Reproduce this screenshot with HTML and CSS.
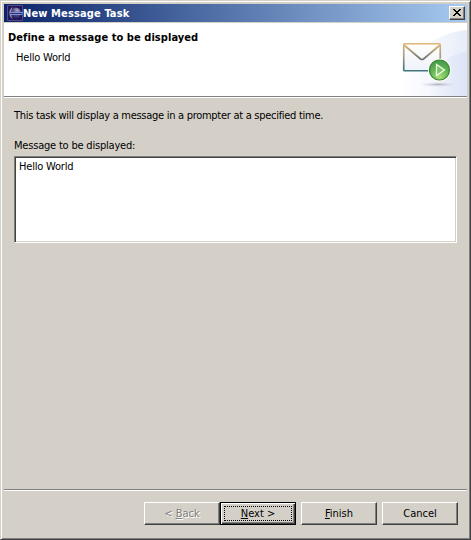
FILE: index.html
```html
<!DOCTYPE html>
<html lang="en">
<head>
<meta charset="utf-8">
<title>New Message Task</title>
<link rel="stylesheet" href="styles.css">
</head>
<body>
<main class="window">
  <header class="titlebar">
    <svg class="app-icon" width="16" height="16" viewBox="0 0 16 16">
      <defs><radialGradient id="moon" cx=".65" cy=".25" r=".8"><stop offset="0" stop-color="#a8a4c8"/><stop offset=".45" stop-color="#545084"/><stop offset="1" stop-color="#201c5c"/></radialGradient></defs>
      <path fill="#201858" stroke="#584888" d="M.5.5h15v15H.5z"/>
      <circle cx="8.500" cy="8" r="5.500" fill="url(#moon)"/>
      <path d="M6 2C1 4 1 12 6 14 3.500 11 3.500 5 6 2z" fill="#9c8cb8"/>
      <path d="M3 7.500h13M3 9.500h12" stroke="#7c94dc"/>
      <path d="M3 8.500h12" stroke="#30306c"/>
    </svg>
    <h1 class="title"><span>New Message Task</span></h1>
    <button class="close" aria-label="Close"><svg width="8" height="7" viewBox="0 0 8 7" shape-rendering="crispEdges"><path d="M0 0h2v1h1v1h2V1h1V0h2v1H7v1H6v1H5v1h1v1h1v1h1v1H6V6H5V5H3v1H2v1H0V6h1V5h1V4h1V3H2V2H1V1H0z"/></svg></button>
  </header>
  <section class="banner">
    <div class="banner-text">
      <h2 class="heading">Define a message to be displayed</h2>
      <p class="subtitle">Hello World</p>
    </div>
    <svg class="banner-art" width="75" height="73" viewBox="0 0 75 73">
      <defs>
        <linearGradient id="fade" x1="0" x2="1"><stop offset="0" stop-color="#fff"/><stop offset=".55" stop-color="#f3f6fd"/><stop offset="1" stop-color="#e6edf9"/></linearGradient>
        <linearGradient id="edge" x1="0" y1="0" x2="0" y2="1"><stop offset="0" stop-color="#dfb778"/><stop offset=".5" stop-color="#9c9c88"/><stop offset="1" stop-color="#40747c"/></linearGradient>
        <linearGradient id="paper" x1="0" y1="0" x2="0" y2="1"><stop offset="0" stop-color="#fffefa"/><stop offset="1" stop-color="#eef2fb"/></linearGradient>
        <linearGradient id="flap" x1="0" y1="0" x2="0" y2="1"><stop offset="0" stop-color="#d8b47c"/><stop offset="1" stop-color="#687474"/></linearGradient>
        <linearGradient id="arc" x1="0" x2="1"><stop offset="0" stop-color="#dfe6f7" stop-opacity="0"/><stop offset="1" stop-color="#dce5f7"/></linearGradient>
        <radialGradient id="green" cx=".5" cy=".85" r=".9"><stop offset="0" stop-color="#a8e078"/><stop offset=".5" stop-color="#64b454"/><stop offset="1" stop-color="#3c9444"/></radialGradient>
        <radialGradient id="shade"><stop offset="0" stop-color="#b4b0c0"/><stop offset="1" stop-color="#d8dcec" stop-opacity="0"/></radialGradient>
      </defs>
      <path d="M10 73C10 38 38 10 75 7v66z" fill="url(#fade)"/>
      <path d="M36 73C40 48 53 31 75 29v44z" fill="url(#arc)"/>
      <ellipse cx="46" cy="61.500" rx="19" ry="2.500" fill="url(#shade)"/>
      <rect x="11.750" y="20.750" width="36.500" height="27" rx="1" fill="url(#paper)" stroke="url(#edge)" stroke-width="1.700"/>
      <path d="M12 22l16.500 14q1.500 1 3 0L48 22" fill="none" stroke="url(#flap)" stroke-width="1.700"/>
      <circle cx="47.500" cy="47" r="11.500" fill="#fffdf0"/>
      <circle cx="47.500" cy="47" r="10" fill="url(#green)" stroke="#39863b" stroke-width="1.200"/>
      <path d="M44.500 41.500v11l8-5.500z" fill="#78c66c" stroke="#f4ffe8" stroke-width="1.200"/>
    </svg>
  </section>
  <section class="content">
    <p class="description"><span>This task will display a message in a prompter at a specified time.</span></p>
    <label class="label" for="message">Message to be displayed:</label>
    <div class="field" id="message"><span class="value">Hello World</span></div>
  </section>
  <footer class="footer">
    <button class="button back" disabled><span>&lt; <u>B</u>ack</span></button>
    <button class="button next"><span><u>N</u>ext &gt;</span></button>
    <button class="button finish"><span><u>F</u>inish</span></button>
    <button class="button"><span>Cancel</span></button>
  </footer>
</main>
</body>
</html>
```
FILE: styles.css
```css
* { box-sizing: border-box; }
body {
  margin: 0;
  color: #000;
  font: 11px/14px Tahoma, "DejaVu Sans Condensed", "DejaVu Sans", sans-serif;
  font-stretch: condensed;
  white-space: nowrap;
}
h1, h2, p { margin: 0; font-size: 11px; line-height: 14px; }
.window {
  width: 471px;
  height: 540px;
  display: flex;
  flex-direction: column;
  padding: 3px 2px 2px 3px;
  background: #d4d0c8;
  border: 1px solid;
  border-color: #d4d0c8 #404040 #404040 #d4d0c8;
  box-shadow: inset 1px 1px #fff, inset -1px -1px #808080;
}
.titlebar {
  width: 463px;
  height: 18px;
  display: flex;
  align-items: center;
  padding: 0 2px 0 3px;
  background: linear-gradient(90deg, #0a246a, #a6caf0);
}
.app-icon { flex: none; }
.title { flex: 1; padding-top: 2px; color: #fff; letter-spacing: .13px; }
.close {
  width: 16px;
  height: 14px;
  display: flex;
  justify-content: center;
  align-items: flex-start;
  padding: 2px 1px 0 0;
  background: #d4d0c8;
  border: 1px solid;
  border-color: #fff #404040 #404040 #fff;
  box-shadow: inset -1px -1px #808080;
}
.banner {
  width: 463px;
  height: 76px;
  display: flex;
  justify-content: space-between;
  background: #fff;
  border-top: 1px solid #d4d0c8;
  border-bottom: 1px solid #fff;
  box-shadow: inset 0 -1px #808080;
}
.banner-text { padding: 8px 0 0 4px; }
.heading { letter-spacing: .06px; }
.subtitle { padding: 6px 0 0 8px; letter-spacing: -.2px; }
.content { flex: 1; width: 463px; padding: 11px 9px 0 10px; }
.description { letter-spacing: -.28px; }
.label { display: block; margin-top: 16px; letter-spacing: -.2px; }
.field {
  width: 443px;
  height: 87px;
  margin-top: 3px;
  padding: 3px 4px;
  letter-spacing: -.2px;
  background: #fff;
  border: 1px solid;
  border-color: #808080 #fff #fff #808080;
  box-shadow: inset 1px 1px #404040, inset -1px -1px #d4d0c8;
}
.footer {
  width: 463px;
  height: 48px;
  display: flex;
  justify-content: flex-end;
  gap: 5px;
  padding: 12px 9px 0 0;
  border-top: 1px solid #808080;
  box-shadow: inset 0 1px #fff;
}
.button {
  width: 76px;
  height: 23px;
  padding: 0;
  color: #000;
  font: inherit;
  background: #d4d0c8;
  border: 1px solid;
  border-color: #fff #404040 #404040 #fff;
  box-shadow: inset -1px -1px #808080;
}
.button u { text-decoration-thickness: 1px; text-underline-offset: 1px; }
.back { margin-right: -5px; color: #808080; text-shadow: 1px 1px #fff; }
.next {
  position: relative;
  border-color: #000;
  box-shadow: inset 1px 1px #fff, inset -1px -1px #404040, inset -2px -2px #808080;
}
.next::after {
  content: "";
  position: absolute;
  inset: 3px;
  border: 1px dotted #000;
}
```
